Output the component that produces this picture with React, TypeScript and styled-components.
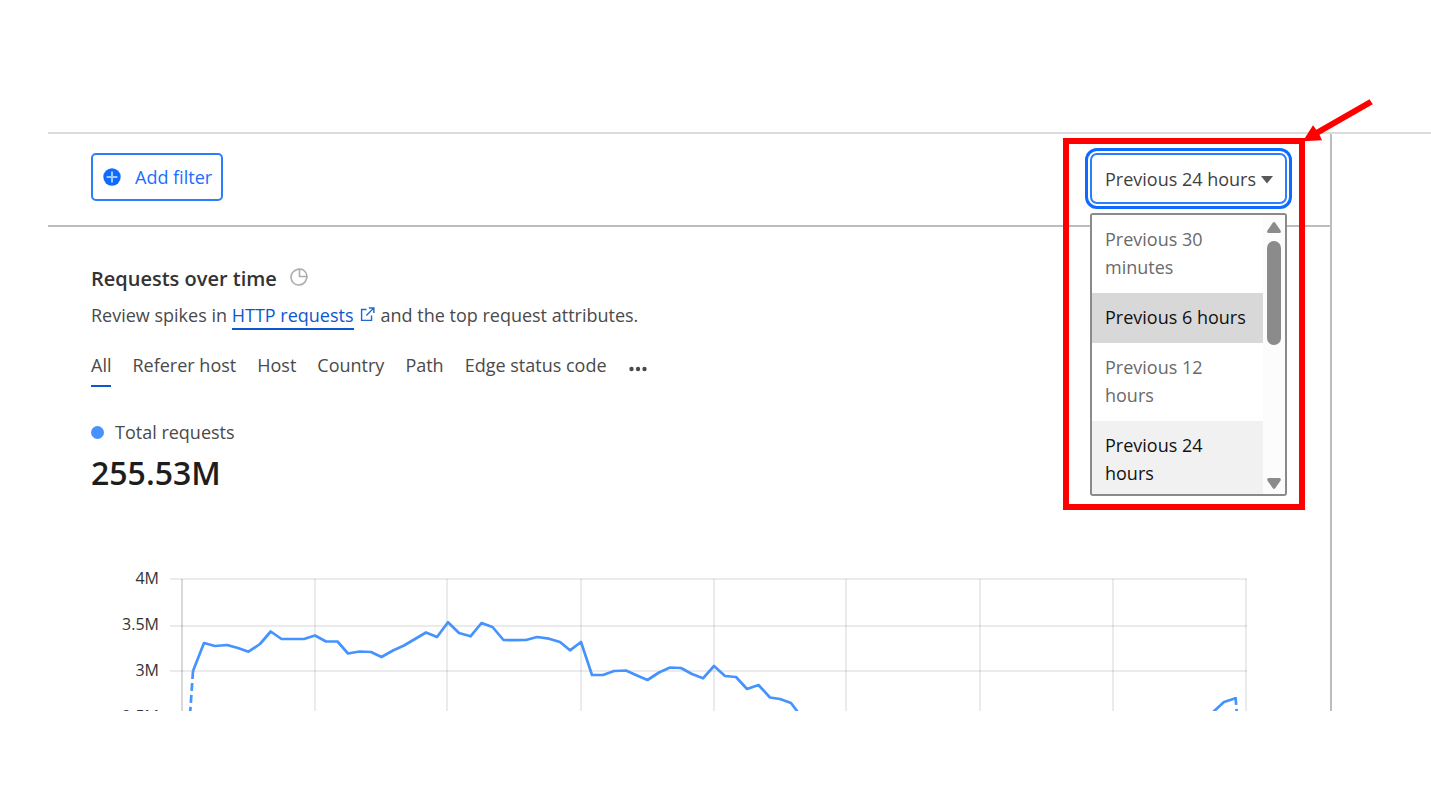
import React, { useState } from "react";
import styled, { createGlobalStyle, css } from "styled-components";

const GlobalStyle = createGlobalStyle`
  *, *::before, *::after { box-sizing: border-box; }
  body {
    margin: 0;
    background: #fff;
    color: #4a4a4a;
    font-family: "Open Sans", "Noto Sans", sans-serif;
    font-size: 18px;
    line-height: 28px;
  }
  button, select { font: inherit; color: inherit; }
`;

const Page = styled.div`
  padding: 132px 0 96px 48px;
`;

const Frame = styled.div`
  border-top: 2px solid #dcdcdc;
  padding-right: 99px;
`;

const Main = styled.main`
  border-right: 2px solid #bdbdbd;
`;

const Toolbar = styled.div`
  display: flex;
  justify-content: space-between;
  align-items: flex-start;
  padding: 19px 43px 21px;
  border-bottom: 2px solid #bdbdbd;
`;

const FilterButton = styled.button`
  display: flex;
  align-items: center;
  gap: 14px;
  height: 48px;
  padding: 0 9px 0 10px;
  border: 2px solid #2b7fff;
  border-radius: 5px;
  background: #fff;
  color: #1a6dff;
`;

const RangePicker = styled.div`
  position: relative;
  width: 197px;
`;

const RangeSelect = styled.select`
  display: block;
  width: 100%;
  height: 51px;
  padding: 0 13px;
  appearance: none;
  border: 2px solid #2b7fff;
  border-radius: 7px;
  outline: 3px solid #0f6bff;
  outline-offset: 2px;
  background: #fff;
  color: #3f3f3f;
`;

const Caret = styled.svg`
  position: absolute;
  right: 13px;
  top: 22px;
  pointer-events: none;
`;

const Menu = styled.div`
  position: absolute;
  z-index: 1;
  top: 60px;
  left: 0;
  display: flex;
  width: 100%;
  height: 283px;
  border: 2px solid #8a8a8a;
  border-radius: 3px;
  background: #fff;
  overflow: hidden;
`;

const OptionList = styled.div`
  flex: 1;
  overflow: hidden;
`;

const Option = styled.button<{ $tone: "plain" | "hover" | "selected" }>`
  display: block;
  width: 100%;
  padding: 10px 13px 12px;
  border: 0;
  text-align: left;
  background: #fff;
  color: #6a6a6a;
  ${(p) => p.$tone === "hover" && css`background: #d8d8d8; color: #111;`}
  ${(p) => p.$tone === "selected" && css`background: #f1f1f1; color: #111;`}
`;

const ScrollTrack = styled.div`
  display: flex;
  flex-direction: column;
  align-items: center;
  width: 22px;
  padding: 7px 0 5px;
  background: #fcfcfc;
`;

const ScrollThumb = styled.div`
  width: 14px;
  height: 104px;
  margin: 8px 0 auto;
  border-radius: 7px;
  background: #8b8b8b;
`;

const Highlight = styled.div`
  position: absolute;
  z-index: 2;
  top: -15px;
  left: -27px;
  width: 242px;
  height: 372px;
  border: 6px solid #ff0000;
  pointer-events: none;
`;

const Arrow = styled.svg`
  position: absolute;
  z-index: 2;
  top: -55px;
  left: 212px;
  pointer-events: none;
`;

const Section = styled.section`
  padding: 38px 43px 0;
`;

const TitleRow = styled.div`
  display: flex;
  align-items: flex-start;
  gap: 13px;
`;

const Title = styled.h2`
  margin: 0;
  font-size: 20px;
  font-weight: 600;
  line-height: 28px;
  color: #333;
`;

const PieIcon = styled.svg`
  margin-top: 3px;
`;

const Description = styled.p`
  margin: 8px 0 0;
`;

const DocLink = styled.a`
  display: inline-block;
  line-height: 26px;
  border-bottom: 2px solid #0b57d0;
  color: #0b57d0;
  text-decoration: none;
`;

const ExternalIcon = styled.svg`
  margin: 0 6px;
`;

const Tabs = styled.div`
  display: flex;
  gap: 21px;
  margin-top: 21px;
`;

const Tab = styled.button<{ $active?: boolean }>`
  padding: 0 0 6px;
  border: 0;
  border-bottom: 2px solid ${(p) => (p.$active ? "#0b57d0" : "transparent")};
  background: none;
  white-space: nowrap;
`;

const MoreButton = styled.button`
  display: flex;
  align-items: center;
  padding: 0;
  border: 0;
  background: none;
`;

const Legend = styled.div`
  display: flex;
  align-items: center;
  gap: 11px;
  margin-top: 31px;
`;

const Dot = styled.span`
  width: 13px;
  height: 13px;
  border-radius: 50%;
  background: #4693ff;
`;

const Total = styled.div`
  margin-top: 7px;
  font-size: 32px;
  font-weight: 600;
  line-height: 40px;
  color: #1d1d1d;
`;

const Chart = styled.div`
  display: flex;
  gap: 11px;
  height: 146px;
  margin-top: 72px;
  padding-right: 40px;
  overflow: hidden;
`;

const Axis = styled.div`
  display: flex;
  flex-direction: column;
  flex: none;
  width: 68px;
  text-align: right;
  font-size: 16px;
  line-height: 20px;
  gap: 26px;
  padding-top: 3px;
  color: #333;
`;

const Plot = styled.svg`
  flex: 1;
  min-width: 0;
  height: 146px;
`;

const ranges = [
  "Previous 30 minutes",
  "Previous 6 hours",
  "Previous 12 hours",
  "Previous 24 hours",
];
const tabs = ["All", "Referer host", "Host", "Country", "Path", "Edge status code"];
const ticks = ["4M", "3.5M", "3M", "2.5M"];

const columns = [12, 145, 277, 411, 544, 676, 810, 943, 1076];
const rows = [14, 61, 106];
const series =
  "23,106 34,78 45,81 57,80 68,83 78.5,86.7 90,79 100.7,66.5 111.5,74 134,74 145,70.5 156,76.5 167.5,76.5 178,88.5 189.5,86.5 201,87 211.5,92 223,85.5 234,80.5 245,74 256,67.5 267,72 278,57.3 289,68 300.5,71.3 311.5,58 322.5,62 333.5,75 344,75.2 356,75 367,72 379,73.7 390,77 400,85.3 411,77 422,110 433,110 444,106 456,105.5 467,110.5 477.5,115 489,107.5 500,102.5 511,103 522,109 533,113.3 544,101 555,111 566,112 577,124 588.5,120 600,132.5 610,134 621,138 630,150";

export default function App() {
  const [range, setRange] = useState("Previous 24 hours");
  const [tab, setTab] = useState("All");

  return (
    <>
      <GlobalStyle />
      <Page>
        <Frame>
          <Main>
            <Toolbar>
              <FilterButton type="button">
                <svg width="18" height="18" viewBox="0 0 18 18" aria-hidden="true">
                  <circle cx="9" cy="9" r="8.7" fill="#0f6bff" />
                  <path d="M9 3.6v10.8M3.6 9h10.8" stroke="#a3c8ff" strokeWidth="2" />
                </svg>
                Add filter
              </FilterButton>
              <RangePicker>
                <RangeSelect
                  aria-label="Time range"
                  value={range}
                  onChange={(e) => setRange(e.target.value)}
                >
                  {ranges.map((r) => (
                    <option key={r}>{r}</option>
                  ))}
                </RangeSelect>
                <Caret width="14" height="9" viewBox="0 0 14 9" aria-hidden="true">
                  <path d="M1 1h12L7 8.5z" fill="#595959" />
                </Caret>
                <Menu>
                  <OptionList role="listbox" aria-label="Time range options">
                    {ranges.map((r, i) => (
                      <Option
                        key={r}
                        type="button"
                        role="option"
                        aria-selected={r === range}
                        $tone={r === range ? "selected" : i === 1 ? "hover" : "plain"}
                        onClick={() => setRange(r)}
                      >
                        {r}
                      </Option>
                    ))}
                  </OptionList>
                  <ScrollTrack aria-hidden="true">
                    <svg width="14" height="11" viewBox="0 0 14 11">
                      <path d="M5.8.8Q7-.6 8.2.8L13.6 8.6Q14.4 10.7 12.4 11H1.6Q-.4 10.7.4 8.6z" fill="#8b8b8b" />
                    </svg>
                    <ScrollThumb />
                    <svg width="14" height="11" viewBox="0 0 14 11">
                      <path d="M5.8 10.2Q7 11.6 8.2 10.2L13.6 2.4Q14.4.3 12.4 0H1.6Q-.4.3.4 2.4z" fill="#8b8b8b" />
                    </svg>
                  </ScrollTrack>
                </Menu>
                <Highlight />
                <Arrow width="74" height="46" viewBox="0 0 74 46" aria-hidden="true">
                  <path d="M67.5 1.3 70.8 6.3 17.5 36.8 20 42.3.8 43.3 11 27.3 14.3 31.8z" fill="#ff0000" />
                </Arrow>
              </RangePicker>
            </Toolbar>

            <Section>
              <TitleRow>
                <Title>Requests over time</Title>
                <PieIcon width="18" height="18" viewBox="0 0 18 18" fill="none" stroke="#adadad" strokeWidth="1.6" aria-hidden="true">
                  <path d="M7 1.6A7.8 7.8 0 1 0 16.4 11" />
                  <path d="M9.5 1v7.5H17A7.5 7.5 0 0 0 9.5 1z" />
                  <path d="M7 1.6Q8.2 1.1 9.5 1M16.4 11Q16.9 10 17 8.5" />
                </PieIcon>
              </TitleRow>
              <Description>
                Review spikes in <DocLink href="#http-requests">HTTP requests</DocLink>
                <ExternalIcon width="15" height="15" viewBox="0 0 16 16" fill="none" stroke="#1f66d6" strokeWidth="1.5" aria-hidden="true">
                  <path d="M7 2.7H1.7V14.3H12.3V9M9.5 1H14.8V6.3M14.6 1.2 6.8 9" />
                </ExternalIcon>
                and the top request attributes.
              </Description>
              <Tabs role="tablist">
                {tabs.map((t) => (
                  <Tab key={t} type="button" role="tab" aria-selected={t === tab} $active={t === tab} onClick={() => setTab(t)}>
                    {t}
                  </Tab>
                ))}
                <MoreButton type="button" aria-label="More">
                  <svg width="20" height="6" viewBox="0 0 20 6" fill="#4a4a4a" aria-hidden="true">
                    <circle cx="3.5" cy="3" r="2.2" />
                    <circle cx="10" cy="3" r="2.2" />
                    <circle cx="16.5" cy="3" r="2.2" />
                  </svg>
                </MoreButton>
              </Tabs>
              <Legend>
                <Dot />
                Total requests
              </Legend>
              <Total>255.53M</Total>
              <Chart>
                <Axis>
                  {ticks.map((t) => (
                    <span key={t}>{t}</span>
                  ))}
                </Axis>
                <Plot viewBox="0 0 1077 146" preserveAspectRatio="none" role="img" aria-label="Requests over time">
                  <g fill="#000" fillOpacity="0.08">
                    {columns.map((x) => (
                      <rect key={x} x={x - 1} y="14" width="2" height="132" />
                    ))}
                    {rows.map((y) => (
                      <rect key={y} x="0" y={y - 1} width="1077" height="2" />
                    ))}
                    <rect x="11" y="14" width="2" height="132" />
                  </g>
                  <g fill="none" stroke="#4693ff" strokeWidth="2.7" strokeLinejoin="round">
                    <polyline points={series} />
                    <polyline points="1042,148 1054,137 1065.5,133.3" />
                    <path d="M23 106 20 150" strokeDasharray="8 4" />
                    <path d="M1065.5 132 1067 150" strokeDasharray="8 4" />
                  </g>
                </Plot>
              </Chart>
            </Section>
          </Main>
        </Frame>
      </Page>
    </>
  );
}
